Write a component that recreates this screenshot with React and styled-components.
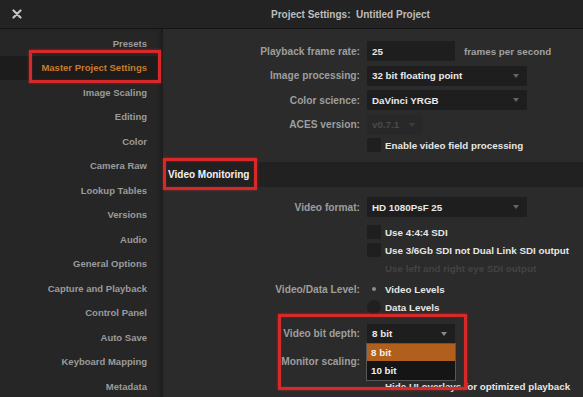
import React from 'react';
import styled, { createGlobalStyle } from 'styled-components';

const Global = createGlobalStyle`
  html, body { margin: 0; padding: 0; background: #2b2b2b; }
  body { font-family: "Liberation Sans", Arial, sans-serif; -webkit-font-smoothing: antialiased; }
`;

const Window = styled.div`
  width: 583px;
  height: 397px;
  overflow: hidden;
  display: flex;
  flex-direction: column;
  background: #2b2b2b;
`;

const TitleBar = styled.header`
  height: 29px;
  flex: none;
  box-sizing: border-box;
  background: #232323;
  border-bottom: 1px solid #141414;
  display: flex;
  align-items: center;
  padding-left: 12px;
`;

const CloseIcon = styled.svg`
  width: 10px;
  height: 10px;
  flex: none;
`;

const Title = styled.div`
  margin-left: 249px;
  font-size: 10px;
  font-weight: bold;
  color: #bdbdbd;
  white-space: pre;
`;

const Body = styled.div`
  flex: 1;
  display: flex;
  min-height: 0;
`;

const Sidebar = styled.nav`
  width: 163px;
  flex: none;
  background: #262626;
  padding-top: 2px;
  box-shadow: inset -4px 0 5px -3px #181818;
`;

const NavItem = styled.div`
  position: relative;
  height: 24.5px;
  display: flex;
  align-items: center;
  justify-content: flex-end;
  padding-right: 16px;
  font-size: 9.5px;
  font-weight: bold;
  color: ${(p) => (p.$active ? '#c87b2c' : '#9b9b9b')};
  background: ${(p) => (p.$active ? '#1c1c1c' : 'transparent')};
`;

const Highlight = styled.div`
  position: absolute;
  top: ${(p) => p.$t}px;
  bottom: ${(p) => p.$b}px;
  left: ${(p) => p.$l}px;
  right: ${(p) => p.$r}px;
  border: 3px solid #d62a2a;
  box-shadow: 0 0 3px rgba(230, 40, 40, 0.55), inset 0 0 2px rgba(230, 40, 40, 0.4);
  pointer-events: none;
  z-index: 5;
`;

const Main = styled.main`
  flex: 1;
  display: flex;
  flex-direction: column;
  padding-top: 12px;
`;

const Row = styled.div`
  display: grid;
  grid-template-columns: 197px 1fr;
  column-gap: 7px;
  align-items: center;
  height: ${(p) => p.$h}px;
  margin-top: ${(p) => p.$mt || 0}px;
  flex: none;
`;

const Label = styled.div`
  text-align: right;
  font-size: 10.2px;
  font-weight: bold;
  color: #9e9e9e;
  white-space: nowrap;
`;

const Control = styled.div`
  display: flex;
  align-items: center;
  gap: ${(p) => p.$gap || 9}px;
`;

const Field = styled.div`
  position: relative;
  width: ${(p) => p.$w}px;
  height: ${(p) => p.$h || 20}px;
  box-sizing: border-box;
  background: ${(p) => (p.$disabled ? '#282828' : '#1e1e1e')};
  display: flex;
  align-items: center;
  justify-content: space-between;
  padding: 0 8px 0 5px;
  font-size: 9.8px;
  font-weight: bold;
  color: ${(p) => (p.$disabled ? '#4b4b4b' : '#e8e8e8')};
`;

const Arrow = styled.span`
  width: 0;
  height: 0;
  border-left: 3px solid transparent;
  border-right: 3px solid transparent;
  border-top: 4px solid ${(p) => (p.$disabled ? '#3d3d3d' : p.$light ? '#8a8a8a' : '#646464')};
`;

const Hint = styled.span`
  font-size: 9.8px;
  font-weight: bold;
  color: #a0a0a0;
`;

const Check = styled.span`
  width: 14px;
  height: 14px;
  flex: none;
  background: ${(p) => (p.$hidden ? 'transparent' : '#1f1f1f')};
  border-radius: 1px;
`;

const Radio = styled.span`
  width: 14px;
  height: 14px;
  flex: none;
  border-radius: 50%;
  background: ${(p) => (p.$on ? 'transparent' : '#202020')};
  display: flex;
  align-items: center;
  justify-content: center;
  &::after {
    content: '';
    width: 4px;
    height: 4px;
    border-radius: 50%;
    background: ${(p) => (p.$on ? '#8e8e8e' : 'transparent')};
  }
`;

const OptionText = styled.span`
  font-size: 9.8px;
  font-weight: bold;
  color: ${(p) => (p.$disabled ? '#434343' : '#e6e6e6')};
  white-space: nowrap;
`;

const Band = styled.div`
  position: relative;
  height: 25px;
  margin-top: 10px;
  flex: none;
  background: #212121;
  display: flex;
  align-items: center;
  padding-left: 5px;
  font-size: 10px;
  font-weight: bold;
  color: #f2f2f2;
`;

const Group = styled.div`
  position: relative;
  display: flex;
  flex-direction: column;
`;

const Popup = styled.div`
  position: absolute;
  top: 100%;
  left: -1px;
  width: 90px;
  box-sizing: border-box;
  border: 1px solid #575757;
  background: #151515;
  z-index: 4;
`;

const PopupItem = styled.div`
  height: ${(p) => p.$h}px;
  display: flex;
  align-items: center;
  padding-left: 4px;
  font-size: 9.8px;
  font-weight: bold;
  color: #f0f0f0;
  background: ${(p) => (p.$selected ? '#b0601c' : 'transparent')};
`;

const navItems = [
  'Presets',
  'Master Project Settings',
  'Image Scaling',
  'Editing',
  'Color',
  'Camera Raw',
  'Lookup Tables',
  'Versions',
  'Audio',
  'General Options',
  'Capture and Playback',
  'Control Panel',
  'Auto Save',
  'Keyboard Mapping',
  'Metadata',
];

export default function App() {
  return (
    <>
      <Global />
      <Window>
        <TitleBar>
          <CloseIcon viewBox="0 0 10 10">
            <path d="M1.5 1.5 L8.5 8.5 M8.5 1.5 L1.5 8.5" stroke="#c4c4c4" strokeWidth="2.2" strokeLinecap="round" />
          </CloseIcon>
          <Title>{'Project Settings:  Untitled Project'}</Title>
        </TitleBar>
        <Body>
          <Sidebar>
            {navItems.map((n) => (
              <NavItem key={n} $active={n === 'Master Project Settings'}>
                {n}
                {n === 'Master Project Settings' && <Highlight $t={-6} $b={-3} $l={29} $r={2} />}
              </NavItem>
            ))}
          </Sidebar>
          <Main>
            <Row $h={20}>
              <Label>Playback frame rate:</Label>
              <Control>
                <Field $w={88}>25</Field>
                <Hint>frames per second</Hint>
              </Control>
            </Row>
            <Row $h={20} $mt={4.5}>
              <Label>Image processing:</Label>
              <Control>
                <Field $w={160}>
                  32 bit floating point <Arrow />
                </Field>
              </Control>
            </Row>
            <Row $h={20} $mt={4.5}>
              <Label>Color science:</Label>
              <Control>
                <Field $w={160}>
                  DaVinci YRGB <Arrow />
                </Field>
              </Control>
            </Row>
            <Row $h={20} $mt={4.5}>
              <Label>ACES version:</Label>
              <Control>
                <Field $w={56} $disabled>
                  v0.7.1 <Arrow $disabled />
                </Field>
              </Control>
            </Row>
            <Row $h={14} $mt={3.5}>
              <span />
              <Control $gap={4}>
                <Check />
                <OptionText>Enable video field processing</OptionText>
              </Control>
            </Row>

            <Band>
              Video Monitoring
              <Highlight $t={-4} $b={-3} $l={0} $r={326} />
            </Band>

            <Row $h={20} $mt={10}>
              <Label>Video format:</Label>
              <Control>
                <Field $w={160}>
                  HD 1080PsF 25 <Arrow />
                </Field>
              </Control>
            </Row>
            <Row $h={18} $mt={6}>
              <span />
              <Control $gap={4}>
                <Check />
                <OptionText>Use 4:4:4 SDI</OptionText>
              </Control>
            </Row>
            <Row $h={18}>
              <span />
              <Control $gap={4}>
                <Check />
                <OptionText>Use 3/6Gb SDI not Dual Link SDI output</OptionText>
              </Control>
            </Row>
            <Row $h={18}>
              <span />
              <Control $gap={4}>
                <Check $hidden />
                <OptionText $disabled>Use left and right eye SDI output</OptionText>
              </Control>
            </Row>
            <Row $h={18} $mt={3}>
              <Label>Video/Data Level:</Label>
              <Control $gap={4}>
                <Radio $on />
                <OptionText>Video Levels</OptionText>
              </Control>
            </Row>
            <Row $h={18}>
              <span />
              <Control $gap={4}>
                <Radio />
                <OptionText>Data Levels</OptionText>
              </Control>
            </Row>

            <Group>
              <Highlight $t={-2} $b={5} $l={115} $r={116} />
              <Row $h={19} $mt={8}>
                <Label>Video bit depth:</Label>
                <Control>
                  <Field $w={88} $h={19}>
                    8 bit <Arrow $light />
                    <Popup>
                      <PopupItem $h={17} $selected>8 bit</PopupItem>
                      <PopupItem $h={19}>10 bit</PopupItem>
                    </Popup>
                  </Field>
                </Control>
              </Row>
              <Row $h={20} $mt={8}>
                <Label>Monitor scaling:</Label>
                <Control />
              </Row>
              <Row $h={18} $mt={6}>
                <span />
                <Control $gap={4}>
                  <Check $hidden />
                  <OptionText>Hide UI overlays for optimized playback</OptionText>
                </Control>
              </Row>
            </Group>
          </Main>
        </Body>
      </Window>
    </>
  );
}
